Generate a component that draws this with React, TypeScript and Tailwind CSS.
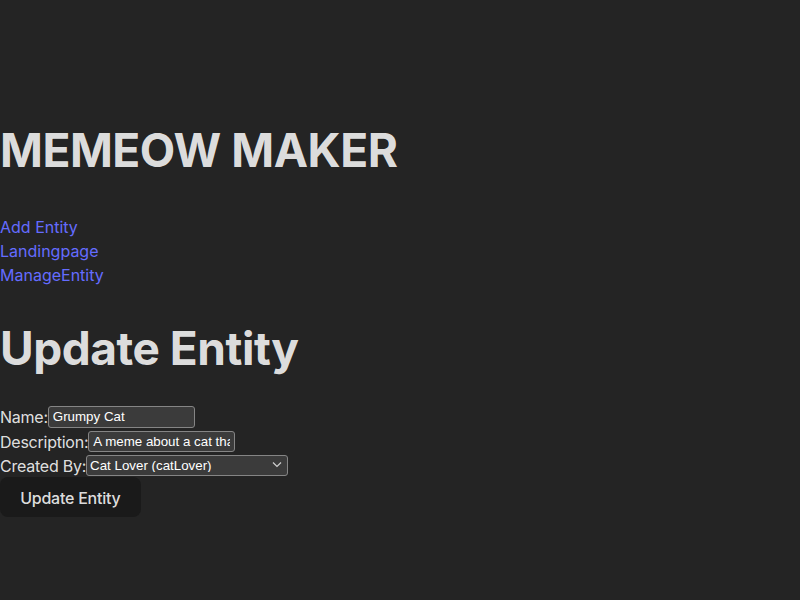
import { useState } from "react";

export default function App() {
	const [name, setName] = useState("Grumpy Cat");
	const [description, setDescription] = useState("A meme about a cat that is always grumpy");
	const [creator, setCreator] = useState("catLover");

	const field =
		"h-[21px] rounded-[3px] border border-[#858585] bg-[#3b3b3b] px-[4px] text-[13.33px] leading-none tracking-normal text-white font-['Liberation_Sans',Arial,sans-serif] outline-none focus:border-[#646cff]";

	return (
		<div className="min-h-screen bg-[#242424] text-[rgba(255,255,255,0.87)] font-['Inter',sans-serif] text-base leading-6 [color-scheme:dark] pt-[125px]">
			<h1 className="text-[46px] leading-[1.1] font-bold tracking-[-0.01em]">MEMEOW MAKER</h1>
			<nav className="mt-[39px] flex flex-col items-start">
				<a href="#" className="text-[#646cff] hover:text-[#535bf2]">Add Entity</a>
				<a href="#" className="text-[#646cff] hover:text-[#535bf2]">Landingpage</a>
				<a href="#" className="text-[#646cff] hover:text-[#535bf2]">ManageEntity</a>
			</nav>
			<h2 className="mt-[36px] text-[46px] leading-[1.1] font-bold tracking-[-0.01em]">Update Entity</h2>
			<form className="mt-[31px] tracking-[-0.015em]" onSubmit={e => e.preventDefault()}>
				<div className="flex h-[25px] items-center">
					<label htmlFor="name">Name:</label>
					<input
						id="name"
						type="text"
						value={name}
						onChange={e => setName(e.target.value)}
						className={`${field} w-[147px] h-[22px]`}
					/>
				</div>
				<div className="flex h-[25px] items-center">
					<label htmlFor="description">Description:</label>
					<input
						id="description"
						type="text"
						value={description}
						onChange={e => setDescription(e.target.value)}
						className={`${field} w-[147px]`}
					/>
				</div>
				<div className="flex h-[23px] items-center">
					<label htmlFor="creator">Created By:</label>
					<div className="relative">
						<select
							id="creator"
							value={creator}
							onChange={e => setCreator(e.target.value)}
							className={`${field} w-[202px] h-[20px] appearance-none pl-[3px] pr-[18px] block`}
						>
							<option value="catLover">Cat Lover (catLover)</option>
							<option value="memeLord">Meme Lord (memeLord)</option>
						</select>
						<svg
							className="pointer-events-none absolute right-[6px] top-[6px]"
							width="10"
							height="7"
							viewBox="0 0 10 7"
							fill="none"
							stroke="#d0d0d0"
							strokeWidth="1.2"
						>
							<path d="M1 1.5l4 4 4-4" />
						</svg>
					</div>
				</div>
				<button
					type="submit"
					className="h-[40px] rounded-lg border border-transparent bg-[#1a1a1a] px-[1.2em] pt-[2px] font-medium leading-none hover:border-[#646cff]"
				>
					Update Entity
				</button>
			</form>
		</div>
	);
}
